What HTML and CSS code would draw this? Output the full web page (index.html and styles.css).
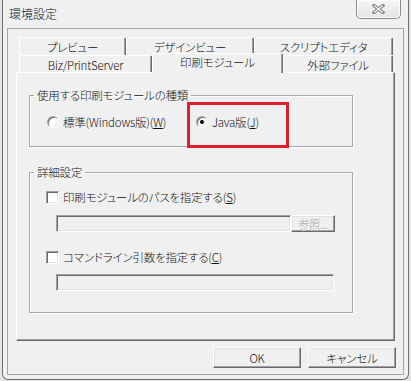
FILE: index.html
```html
<!DOCTYPE html>
<html lang="ja">
<head>
<meta charset="utf-8">
<title>環境設定</title>
<link rel="stylesheet" href="styles.css">
</head>
<body>
<div class="window">
  <div class="titlebar">
    <span class="title">環境設定</span>
    <div class="close">
      <svg width="13" height="10" viewBox="0 0 13 10">
        <path d="M2 1.5 L11 8.5 M11 1.5 L2 8.5" stroke="#7d7d7d" stroke-width="3.2" stroke-linecap="square" fill="none"/>
        <path d="M2 1.5 L11 8.5 M11 1.5 L2 8.5" stroke="#fbfbfb" stroke-width="1.2" stroke-linecap="butt" fill="none"/>
      </svg>
    </div>
  </div>
  <div class="client">
    <div class="tabctl">
      <div class="tabrow row1">
        <div class="tab w1">プレビュー</div>
        <div class="tab w2">デザインビュー</div>
        <div class="tab w3">スクリプトエディタ</div>
      </div>
      <div class="tabrow row2">
        <div class="tab w4">Biz/PrintServer</div>
        <div class="tab sel w5">印刷モジュール</div>
        <div class="tab w6">外部ファイル</div>
      </div>
      <div class="panel">
        <fieldset class="group g1">
          <legend>使用する印刷モジュールの種類</legend>
          <div class="radios">
            <label class="opt r1"><span class="rb"></span><span>標準(Windows版)(<u>W</u>)</span></label>
            <label class="opt r2"><span class="rb on"></span><span>Java版(<u>J</u>)</span></label>
          </div>
        </fieldset>
        <fieldset class="group g2">
          <legend>詳細設定</legend>
          <div class="details">
            <label class="opt"><span class="cb"></span><span>印刷モジュールのパスを指定する(<u>S</u>)</span></label>
            <div class="inrow">
              <div class="field f1"></div>
              <div class="btn browse">参照...</div>
            </div>
            <label class="opt c2"><span class="cb"></span><span>コマンドライン引数を指定する(<u>C</u>)</span></label>
            <div class="inrow r2row">
              <div class="field f2"></div>
            </div>
          </div>
        </fieldset>
      </div>
    </div>
    <div class="buttons">
      <div class="btn act">OK</div>
      <div class="btn act">キャンセル</div>
    </div>
  </div>
</div>
</body>
</html>
```
FILE: styles.css
```css
* { box-sizing: border-box; }
html, body { margin: 0; padding: 0; }
body {
  width: 411px;
  height: 381px;
  overflow: hidden;
  background: #e4e6e4;
  font-family: "Noto Sans CJK JP", "Noto Sans", sans-serif;
  font-size: 11.5px;
  font-weight: 300;
  letter-spacing: -0.2px;
  color: #111;
  font-feature-settings: "palt" 1;
}
.window {
  margin-left: 2px;
  width: 407px;
  height: 380px;
  background: #eef0f2;
  border: 1px solid #6f6f6f;
  border-top: none;
  border-radius: 0 0 6px 6px;
  padding: 0 4px 4px;
  display: flex;
  flex-direction: column;
}
.titlebar {
  height: 28px;
  display: flex;
  align-items: flex-start;
  flex: none;
}
.title {
  margin: 6px 0 0 2px;
  line-height: 16px;
  font-size: 12px;
  letter-spacing: 0;
}
.close {
  margin-left: auto;
  margin-right: 3px;
  width: 45px;
  height: 19px;
  border: 1px solid #8c8c8c;
  border-top: none;
  border-radius: 0 0 5px 5px;
  background: linear-gradient(#f6f6f6, #e4e4e4);
  box-shadow: inset 0 0 0 1px #fdfdfd;
  display: flex;
  align-items: center;
  justify-content: center;
}
.client {
  flex: 1;
  border: 1px solid #a5a5a5;
  background: #f0f0f0;
  padding: 8px 7px 0 8px;
}
.tabctl { width: 379px; }
.tabrow {
  display: flex;
  padding-left: 3px;
}
.row1 { height: 18px; }
.row2 { height: 17px; }
.tab {
  flex: none;
  text-align: center;
  background: #f0f0f0;
  border-top: 1px solid #fff;
  border-left: 1px solid #fff;
  border-right: 1px solid #6a6a6a;
  box-shadow: inset -1px 0 #a0a0a0;
  border-radius: 2px 2px 0 0;
  line-height: 16px;
}
.row1 .tab { height: 18px; padding-top: 1px; }
.row2 .tab { height: 17px; padding-top: 1px; }
.w1 { width: 107px; }
.w2 { width: 128px; }
.w3 { width: 139px; }
.w4 { width: 133px; }
.w5 { width: 131px; }
.w6 { width: 110px; }
.row2 .tab.sel {
  position: relative;
  z-index: 1;
  height: 20px;
  margin-top: -2px;
  padding-top: 0;
}
.panel {
  height: 269px;
  border-top: 1px solid #fff;
  border-left: 1px solid #fff;
  border-right: 1px solid #6a6a6a;
  border-bottom: 1px solid #6a6a6a;
  box-shadow: inset -1px -1px #a0a0a0;
  padding: 16px 0 0 12px;
}
.group {
  margin: 0;
  padding: 0;
  width: 324px;
  border: 1px solid #a8a8a8;
  box-shadow: inset 1px 1px #fff, 1px 1px #fff;
  min-inline-size: 0;
}
.group legend {
  margin-left: 4px;
  padding: 0 3px;
  line-height: 12px;
  height: 12px;
}
.g2 { margin-top: 19px; }
.radios {
  display: flex;
  padding: 13px 0 16px 17px;
}
.opt {
  display: flex;
  align-items: center;
  height: 16px;
  line-height: 16px;
  gap: 4px;
  white-space: nowrap;
}
.r1 { width: 149px; }
.r2 { position: relative; }
.r2::after {
  content: "";
  position: absolute;
  left: -9px;
  top: -12px;
  width: 96px;
  height: 40px;
  border: 3px solid #dc1f2a;
}
.rb {
  flex: none;
  width: 12px;
  height: 12px;
  border-radius: 50%;
  background: #fff;
  border: 1px solid;
  border-color: #a0a0a0 #fff #fff #a0a0a0;
  box-shadow: inset 1px 1px #6a6a6a, inset -1px -1px #e3e3e3;
  display: flex;
  align-items: center;
  justify-content: center;
}
.rb.on::before {
  content: "";
  width: 4px;
  height: 4px;
  border-radius: 50%;
  background: #000;
}
.cb {
  flex: none;
  width: 13px;
  height: 13px;
  background: #fff;
  border: 1px solid;
  border-color: #a0a0a0 #fff #fff #a0a0a0;
  box-shadow: inset 1px 1px #6a6a6a, inset -1px -1px #e3e3e3;
}
.details { padding: 11px 0 21px 16px; }
.inrow {
  display: flex;
  margin: 10px 0 0 10px;
  height: 17px;
}
.c2 { margin-top: 17px; }
.r2row { margin-top: 9px; }
.field {
  height: 17px;
  background: #f0f0f0;
  border: 1px solid;
  border-color: #a0a0a0 #fff #fff #a0a0a0;
  box-shadow: inset 1px 1px #6a6a6a, inset -1px -1px #e3e3e3;
}
.f1 { width: 235px; }
.f2 { width: 278px; }
.btn {
  display: flex;
  align-items: center;
  justify-content: center;
  background: #f0f0f0;
  border: 1px solid;
  border-color: #fff #6a6a6a #6a6a6a #fff;
  box-shadow: inset -1px -1px #a0a0a0, inset 1px 1px #e3e3e3;
}
.browse {
  width: 44px;
  height: 17px;
  color: #a0a0a0;
  text-shadow: 1px 1px #fff;
  font-size: 11px;
  line-height: 14px;
}
.buttons {
  display: flex;
  justify-content: flex-end;
  gap: 7px;
  margin-top: 6px;
}
.act {
  width: 88px;
  height: 21px;
  line-height: 16px;
}
```
